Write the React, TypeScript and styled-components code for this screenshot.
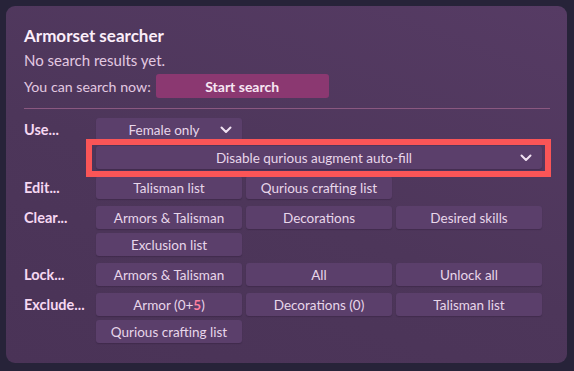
import React from "react";
import styled, { createGlobalStyle } from "styled-components";

const GlobalStyle = createGlobalStyle`
	html, body {
		margin: 0;
		padding: 0;
		background: #272339;
	}
	body {
		font-family: Lato, "Noto Sans", sans-serif;
		width: 574px;
		height: 371px;
		overflow: hidden;
	}
`;

const Page = styled.div`
	padding: 6px 7px 8px 6px;
	box-sizing: border-box;
	width: 574px;
	height: 371px;
`;

const Panel = styled.section`
	height: 100%;
	box-sizing: border-box;
	border-radius: 9px;
	background: linear-gradient(200deg, #563b64 0%, #4d365a 55%, #4a3357 100%);
	padding: 20px 17px 0 18px;
	color: #e8d2e6;
`;

const Title = styled.h2`
	margin: 0;
	font-size: 17px;
	font-weight: 700;
	color: #fbeefa;
	line-height: 20px;
`;

const Line = styled.p`
	margin: 4px 0 0 0;
	font-size: 15px;
	line-height: 20px;
	color: #e3c9e1;
`;

const SearchRow = styled.div`
	display: flex;
	align-items: center;
	gap: 5px;
	margin-top: 4px;
	font-size: 14.2px;
	color: #e3c9e1;
`;

const StartButton = styled.button`
	width: 173px;
	height: 24px;
	border: none;
	border-radius: 3px;
	background: #8b3871;
	color: #f7e6f3;
	font-family: inherit;
	font-size: 14px;
	font-weight: 700;
`;

const Divider = styled.hr`
	margin: 10px 0 0 0;
	border: none;
	height: 1px;
	background: #8a5880;
	width: 526px;
`;

const Groups = styled.div`
	display: flex;
	flex-direction: column;
	gap: 7px;
	margin-top: 9px;
`;

const Group = styled.div`
	display: grid;
	grid-template-columns: 72px 1fr;
	align-items: start;
`;

const Label = styled.div`
	font-size: 14.5px;
	font-weight: 700;
	color: #f6d8f2;
	line-height: 23px;
	white-space: nowrap;
`;

const Buttons = styled.div<{ $gap?: number }>`
	display: grid;
	grid-template-columns: repeat(3, 146px);
	column-gap: 4px;
	row-gap: ${(p) => p.$gap ?? 4}px;
`;

const Btn = styled.button<{ $span?: number }>`
	grid-column: span ${(p) => p.$span ?? 1};
	height: 23px;
	border: none;
	border-radius: 3px;
	background: #5b3f6b;
	color: #e8d6ea;
	font-family: inherit;
	font-size: 13.5px;
	padding: 0;
	box-shadow: 0 1px 1px rgba(30, 15, 40, 0.25);
`;

const Select = styled.div<{ $span?: number; $marked?: boolean }>`
	position: relative;
	grid-column: span ${(p) => p.$span ?? 1};
	height: 23px;
	border-radius: 3px;
	background: #5b3f6b;
	color: #e8d6ea;
	font-size: 13.5px;
	display: flex;
	align-items: center;
	padding: 0 10px 0 12px;
	box-shadow: 0 1px 1px rgba(30, 15, 40, 0.25);

	&::after {
		content: "";
		display: ${(p) => (p.$marked ? "block" : "none")};
		position: absolute;
		top: -7px;
		bottom: -8px;
		left: -10px;
		right: -9px;
		border: 6px solid #fa5557;
		pointer-events: none;
	}
`;

const SelectText = styled.span`
	flex: 1;
	text-align: center;
`;

const Hot = styled.span`
	color: #ff7f9f;
	font-weight: 700;
`;

const Chevron = () => (
	<svg width="12" height="8" viewBox="0 0 12 8">
		<path
			d="M1.5 1.5 L6 6 L10.5 1.5"
			fill="none"
			stroke="#f1e2f2"
			strokeWidth="2"
			strokeLinecap="round"
			strokeLinejoin="round"
		/>
	</svg>
);

const App: React.FunctionComponent = () => {
	return (
		<Page>
			<GlobalStyle />
			<Panel>
				<Title>Armorset searcher</Title>
				<Line>No search results yet.</Line>
				<SearchRow>
					<span>You can search now:</span>
					<StartButton>Start search</StartButton>
				</SearchRow>
				<Divider />
				<Groups>
					<Group>
						<Label>Use...</Label>
						<Buttons $gap={5}>
							<Select>
								<SelectText>Female only</SelectText>
								<Chevron />
							</Select>
							<Select $span={3} $marked>
								<SelectText>Disable qurious augment auto-fill</SelectText>
								<Chevron />
							</Select>
						</Buttons>
					</Group>
					<Group>
						<Label>Edit...</Label>
						<Buttons>
							<Btn>Talisman list</Btn>
							<Btn>Qurious crafting list</Btn>
						</Buttons>
					</Group>
					<Group>
						<Label>Clear...</Label>
						<Buttons>
							<Btn>Armors &amp; Talisman</Btn>
							<Btn>Decorations</Btn>
							<Btn>Desired skills</Btn>
							<Btn>Exclusion list</Btn>
						</Buttons>
					</Group>
					<Group>
						<Label>Lock...</Label>
						<Buttons>
							<Btn>Armors &amp; Talisman</Btn>
							<Btn>All</Btn>
							<Btn>Unlock all</Btn>
						</Buttons>
					</Group>
					<Group>
						<Label>Exclude...</Label>
						<Buttons>
							<Btn>
								Armor (0+<Hot>5</Hot>)
							</Btn>
							<Btn>Decorations (0)</Btn>
							<Btn>Talisman list</Btn>
							<Btn>Qurious crafting list</Btn>
						</Buttons>
					</Group>
				</Groups>
			</Panel>
		</Page>
	);
};

export default App;
